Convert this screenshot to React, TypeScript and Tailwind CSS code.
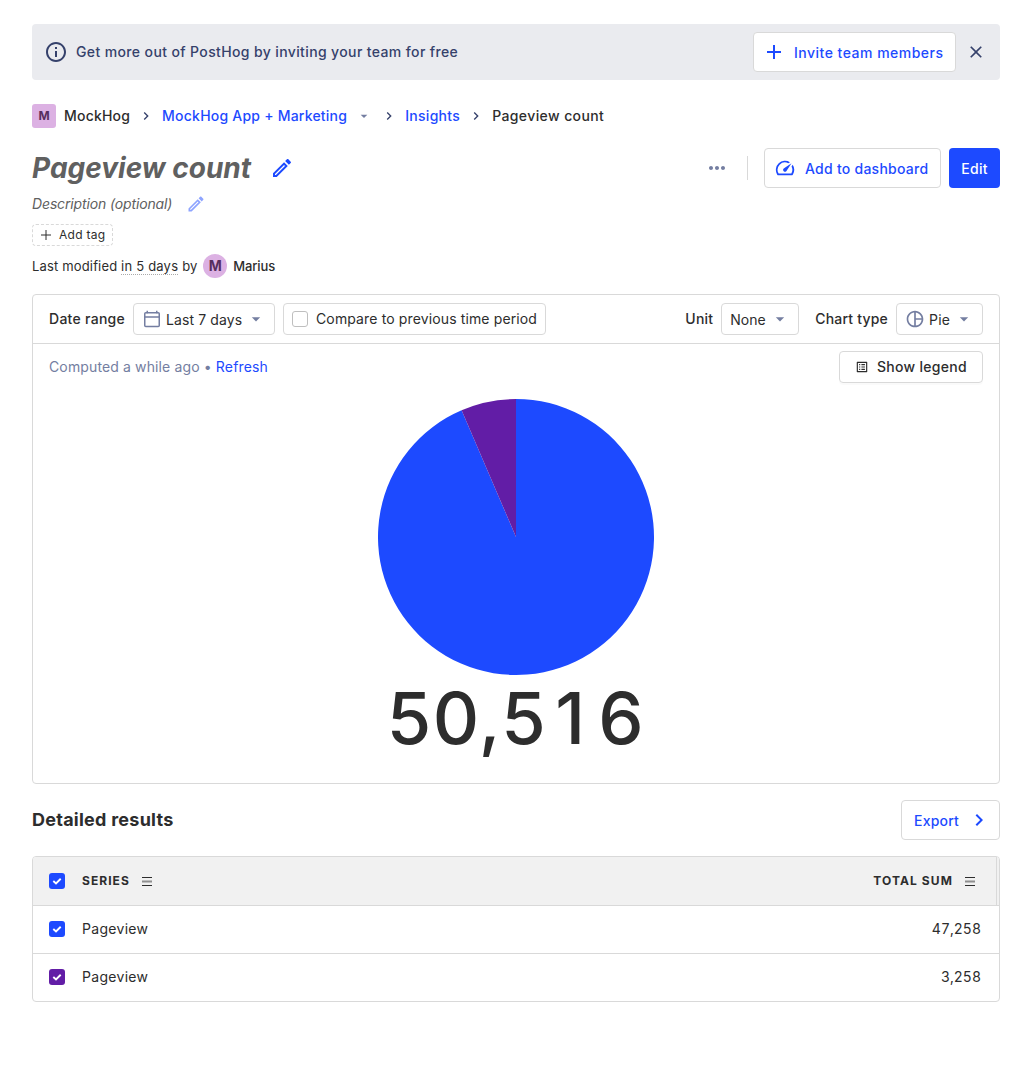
import React from "react";
import {
  MdInfoOutline,
  MdAdd,
  MdClose,
  MdChevronRight,
  MdArrowDropDown,
  MdOutlineEdit,
  MdMoreHoriz,
  MdOutlinePieChart,
  MdOutlineListAlt,
  MdSpeed,
} from "react-icons/md";

function Calendar() {
  return (
    <svg viewBox="0 0 20 20" className="size-5 shrink-0" fill="none" stroke="#747ea1" strokeWidth="1.5">
      <rect x="2.75" y="3.75" width="14.5" height="13.75" rx="1" />
      <path d="M2.75 8h14.5M5.25 1.75v2.5M14.75 1.75v2.5" />
    </svg>
  );
}

function ThinPlus() {
  return (
    <svg viewBox="0 0 10 10" className="size-2.5 shrink-0" fill="none" stroke="#2d2d2d" strokeWidth="1">
      <path d="M5 0v10M0 5h10" />
    </svg>
  );
}

function Caret({ className = "size-5" }: { className?: string }) {
  return <MdArrowDropDown className={`shrink-0 text-[#747ea1] ${className}`} />;
}

function Check({ purple = false }: { purple?: boolean }) {
  return (
    <span className={`flex size-4 shrink-0 items-center justify-center rounded-[3px] ${purple ? "bg-[#621da6]" : "bg-[#1d4aff]"}`}>
      <svg viewBox="0 0 16 16" className="size-4" fill="none" stroke="#fff" strokeWidth="1.9">
        <path d="M4.3 8 7 10.4 11.7 5.8" />
      </svg>
    </span>
  );
}

function MenuLines() {
  return (
    <svg viewBox="0 0 10 10" className="size-2.5 shrink-0" fill="#2d2d2d">
      <path d="M0 1h10v1H0zM0 9h10v1H0z" />
      <path d="M0 4.5h10v2H0z" opacity=".5" />
    </svg>
  );
}

const TOTAL = 50516;
const SECOND = 3258;

function Pie() {
  const a = (SECOND / TOTAL) * Math.PI * 2;
  const x = 138 - 138 * Math.sin(a);
  const y = 138 - 138 * Math.cos(a);
  return (
    <svg viewBox="0 0 276 276" className="size-[276px] shrink-0">
      <path d={`M138 138V0A138 138 0 1 1 ${x} ${y}Z`} fill="#1d4aff" />
      <path d={`M138 138L${x} ${y}A138 138 0 0 1 138 0Z`} fill="#621da6" />
    </svg>
  );
}

function Row({ value, purple }: { value: string; purple?: boolean }) {
  return (
    <div className="flex h-12 items-center border-t border-[#d9d9d9] pr-[18px] pb-px pl-4">
      <Check purple={purple} />
      <span className="ml-[17px] tracking-[0.3px]">Pageview</span>
      <span className="ml-auto tabular-nums">{value}</span>
    </div>
  );
}

export default function App() {
  return (
    <div className="h-[1066px] w-[1032px] bg-white px-8 pt-6 font-['Inter',sans-serif] text-sm leading-5 whitespace-nowrap text-[#2d2d2d]">
      <div className="flex h-14 items-center rounded bg-[#eaebef] pr-3.5 pl-3 text-[#35416b]">
        <MdInfoOutline className="size-6 shrink-0" />
        <span className="ml-2 font-medium tracking-[0.375px]">Get more out of PostHog by inviting your team for free</span>
        <button className="ml-auto flex h-10 w-[203px] items-center rounded border border-[#d9d9d9] bg-white pl-2 font-medium text-[#1d4aff]">
          <MdAdd className="size-6" />
          <span className="mt-0.5 ml-2 tracking-[0.49px]">Invite team members</span>
        </button>
        <MdClose className="ml-2.5 size-5" />
      </div>

      <nav className="mt-6 flex h-6 items-center font-medium">
        <span className="flex size-6 items-center justify-center rounded-[3px] bg-[#dcb1e3] text-xs font-bold text-[#572e5e]">M</span>
        <span className="ml-2 tracking-[0.2px]">MockHog</span>
        <MdChevronRight className="mx-2 size-4 text-[#35416b]" />
        <span className="tracking-[0.22px] text-[#1d4aff]">MockHog App + Marketing</span>
        <Caret className="mr-px ml-[9px] size-4" />
        <MdChevronRight className="mx-2 size-4 text-[#35416b]" />
        <span className="tracking-[0.3px] text-[#1d4aff]">Insights</span>
        <MdChevronRight className="mx-2 size-4 text-[#35416b]" />
        <span className="tracking-[0.4px]">Pageview count</span>
      </nav>

      <header className="mt-5 flex h-10 items-center">
        <h1 className="text-[28px] leading-10 font-bold text-[#606060] italic">Pageview count</h1>
        <MdOutlineEdit className="ml-[19px] size-6 text-[#1d4aff]" />
        <MdMoreHoriz className="ml-auto size-6 text-[#747ea1]" />
        <div className="mr-4 ml-[18px] h-6 w-px bg-[#d9d9d9]" />
        <button className="flex h-10 w-[177px] items-center rounded border border-[#d9d9d9] pl-[9px] font-medium text-[#1d4aff]">
          <MdSpeed className="size-[22px] shrink-0" />
          <span className="mt-0.5 ml-[9px] tracking-[0.26px]">Add to dashboard</span>
        </button>
        <button className="ml-2 h-10 w-[51px] rounded bg-[#1d4aff] pt-0.5 font-medium tracking-[0.3px] text-white">Edit</button>
      </header>
      <div className="mt-1.5 flex h-5 items-center">
        <span className="tracking-[-0.14px] text-[#606060] italic">Description (optional)</span>
        <MdOutlineEdit className="ml-3.5 size-5 text-[#8ea4ff]" />
      </div>
      <button className="mt-2.5 flex h-[22px] w-[81px] items-center rounded border border-dashed border-[#d9d9d9] pl-2 text-xs">
        <ThinPlus />
        <span className="ml-2 tracking-[0.3px]">Add tag</span>
      </button>
      <div className="mt-2 flex h-6 items-center text-[13px]">
        <span className="tracking-[0.16px] whitespace-pre">Last modified </span>
        <span className="border-b border-dotted border-[#aaa] leading-4 tracking-[0.2px]">in 5 days</span>
        <span className="ml-1">by</span>
        <span className="mx-1.5 flex size-6 items-center justify-center rounded-full bg-[#dcb1e3] text-sm font-bold text-[#572e5e]">M</span>
        <span className="font-medium tracking-[-0.1px]">Marius</span>
      </div>

      <section className="mt-4 h-[490px] rounded border border-[#d9d9d9]">
        <div className="flex h-[49px] items-center border-b border-[#d9d9d9] px-4">
          <span className="w-[76px] font-medium tracking-[0.28px]">Date range</span>
          <button className="ml-2 flex h-8 w-[142px] items-center rounded border border-[#d9d9d9] px-2">
            <Calendar />
            <span className="mt-0.5 ml-1 tracking-[0.1px]">Last 7 days</span>
            <Caret className="ml-auto size-5" />
          </button>
          <label className="ml-2 flex h-8 w-[263px] items-center rounded border border-[#d9d9d9] px-2">
            <span className="size-4 shrink-0 rounded-[3px] border border-[#bfbfbf]" />
            <span className="ml-2 tracking-[0.13px]">Compare to previous time period</span>
          </label>
          <span className="ml-auto font-medium tracking-[0.2px]">Unit</span>
          <button className="ml-2 flex h-8 w-[78px] items-center rounded border border-[#d9d9d9] px-2">
            <span className="mt-0.5">None</span>
            <Caret className="ml-auto size-5" />
          </button>
          <span className="ml-4 font-medium tracking-[0.2px]">Chart type</span>
          <button className="ml-2 flex h-8 w-[87px] items-center rounded border border-[#d9d9d9] px-2">
            <MdOutlinePieChart className="size-5 shrink-0 text-[#747ea1]" />
            <span className="mt-0.5 ml-1 tracking-[0.2px]">Pie</span>
            <Caret className="ml-auto size-5" />
          </button>
        </div>
        <div className="mt-[7px] flex h-8 items-center px-4">
          <span className="tracking-[0.13px] whitespace-pre text-[#747ea1]">Computed a while ago • </span>
          <span className="tracking-[0.15px] text-[#1d4aff]">Refresh</span>
          <button className="ml-auto flex h-8 w-36 items-center rounded border border-[#d9d9d9] pl-[15px] font-medium shadow-[0_2px_0_rgba(0,0,0,0.02)]">
            <MdOutlineListAlt className="size-3.5" />
            <span className="ml-2 tracking-[0.28px]">Show legend</span>
          </button>
        </div>
        <div className="mt-4 flex flex-col items-center">
          <Pie />
          <div className="text-[72px] leading-[86px] font-medium tracking-[1.5px]">
            50,5<span className="inline-block w-[51px] pr-1 text-center">1</span>6
          </div>
        </div>
      </section>

      <div className="mt-4 flex h-10 items-center justify-between">
        <h2 className="text-lg font-bold tracking-[0.25px]">Detailed results</h2>
        <button className="flex h-10 w-[99px] items-center rounded border border-[#d9d9d9] pr-2 pl-3 font-medium text-[#1d4aff]">
          <span className="mt-0.5 tracking-[0.2px]">Export</span>
          <MdChevronRight className="ml-auto size-6" />
        </button>
      </div>

      <section className="mt-4 h-[146px] overflow-hidden rounded border border-[#d9d9d9]">
        <div className="flex h-12 items-stretch bg-[#f1f1f1] pr-0.5 text-xs font-bold">
          <div className="flex flex-1 items-center border-r border-[#d9d9d9] pr-[21px] pl-4">
            <Check />
            <span className="mr-3 ml-[17px] tracking-[1.05px]">SERIES</span>
            <MenuLines />
            <span className="mr-3 ml-auto tracking-[1.1px]">TOTAL SUM</span>
            <MenuLines />
          </div>
        </div>
        <Row value="47,258" />
        <Row value="3,258" purple />
      </section>
    </div>
  );
}
